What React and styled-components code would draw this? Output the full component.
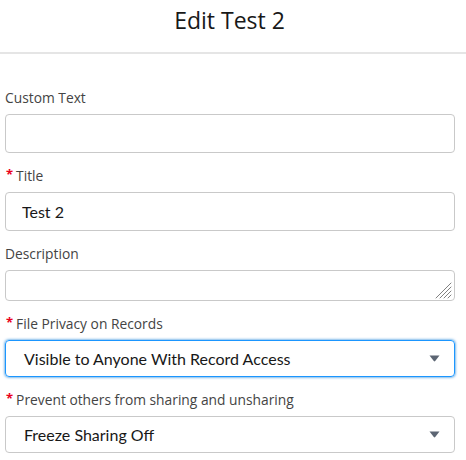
import React from "react";
import styled, { createGlobalStyle } from "styled-components";

const GlobalStyle = createGlobalStyle`
  body {
    margin: 0;
    background: #ffffff;
    font-family: "Open Sans", "Noto Sans", sans-serif;
  }
`;

const Modal = styled.div`
  width: 466px;
  height: 460px;
  overflow: hidden;
  background: #ffffff;
`;

const Header = styled.header`
  height: 52px;
  padding-right: 7px;
  border-bottom: 2px solid #e5e5e5;
  display: flex;
  justify-content: center;
  align-items: flex-start;
`;

const Heading = styled.h2`
  margin: 4px 0 0;
  font-size: 23px;
  line-height: 32px;
  font-weight: 400;
  color: #181818;
`;

const Form = styled.form`
  width: 450px;
  padding: 34px 0 0 5px;
  display: flex;
  flex-direction: column;
  gap: 13px;
`;

const Field = styled.div`
  display: flex;
  flex-direction: column;
  gap: 6px;
`;

const Label = styled.label`
  height: 20px;
  line-height: 20px;
  font-size: 13.8px;
  color: #444444;
  display: flex;
  align-items: center;
`;

const Required = styled.abbr`
  color: #ea001e;
  text-decoration: none;
  font-size: 13px;
  font-weight: 700;
  margin: 0 3px 0 1px;
  position: relative;
  top: -2px;
`;

const Input = styled.input`
  box-sizing: border-box;
  height: 39px;
  width: 100%;
  border: 1px solid #c9c9c9;
  border-radius: 4px;
  padding: 0 16px;
  font-family: "Lato", "Open Sans", sans-serif;
  font-size: 16px;
  color: #181818;
  outline: none;
  background: #ffffff;
`;

const AreaWrap = styled.div`
  position: relative;
  height: 31px;
`;

const Area = styled.textarea`
  box-sizing: border-box;
  display: block;
  height: 31px;
  width: 100%;
  border: 1px solid #c9c9c9;
  border-radius: 4px;
  resize: none;
  outline: none;
`;

const Grip = styled.svg`
  position: absolute;
  right: 3px;
  bottom: 2px;
  pointer-events: none;
`;

const Select = styled.div`
  box-sizing: border-box;
  height: 37px;
  width: 100%;
  display: flex;
  align-items: center;
  justify-content: space-between;
  padding: 0 14px 0 18px;
  border: 1px solid ${(p) => (p.$focused ? "#1b96ff" : "#c9c9c9")};
  border-radius: 4px;
  box-shadow: ${(p) => (p.$focused ? "0 0 3px #0176d3" : "none")};
  font-family: "Lato", "Open Sans", sans-serif;
  font-size: 16px;
  color: #181818;
`;

const Caret = () => (
  <svg width="11" height="7" viewBox="0 0 11 7">
    <path d="M0.5 0.5 H10.5 L6.2 6 Q5.5 6.8 4.8 6 Z" fill="#5c6573" />
  </svg>
);

const ReqLabel = ({ children }) => (
  <Label>
    <Required title="required">*</Required>
    {children}
  </Label>
);

export default function App() {
  return (
    <Modal>
      <GlobalStyle />
      <Header>
        <Heading>Edit Test 2</Heading>
      </Header>
      <Form>
        <Field>
          <Label>Custom Text</Label>
          <Input type="text" />
        </Field>
        <Field>
          <ReqLabel>Title</ReqLabel>
          <Input type="text" defaultValue="Test 2" />
        </Field>
        <Field>
          <Label>Description</Label>
          <AreaWrap>
            <Area />
            <Grip width="17" height="17" viewBox="0 0 17 17">
              <g stroke="#808080" strokeWidth="1" strokeLinecap="round">
                <line x1="16" y1="1" x2="1" y2="16" />
                <line x1="16" y1="5" x2="5" y2="16" />
                <line x1="16" y1="9" x2="9" y2="16" />
                <line x1="16" y1="13" x2="13" y2="16" />
              </g>
            </Grip>
          </AreaWrap>
        </Field>
        <Field>
          <ReqLabel>File Privacy on Records</ReqLabel>
          <Select $focused>
            <span>Visible to Anyone With Record Access</span>
            <Caret />
          </Select>
        </Field>
        <Field>
          <ReqLabel>Prevent others from sharing and unsharing</ReqLabel>
          <Select>
            <span>Freeze Sharing Off</span>
            <Caret />
          </Select>
        </Field>
      </Form>
    </Modal>
  );
}
